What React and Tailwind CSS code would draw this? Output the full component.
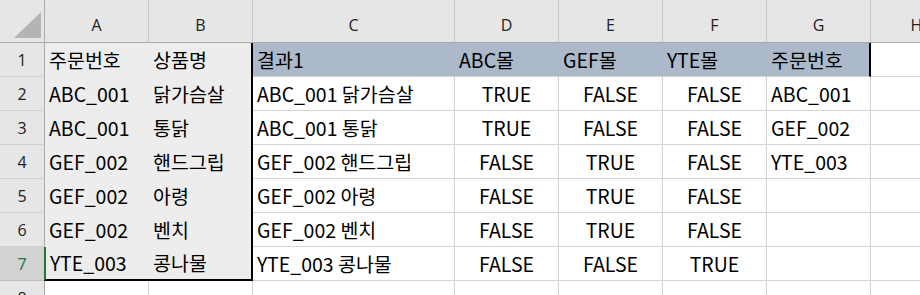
const cols = [
  { key: 'A', w: 'w-[104px]' },
  { key: 'B', w: 'w-[104px]' },
  { key: 'C', w: 'w-[202px]' },
  { key: 'D', w: 'w-[104px]' },
  { key: 'E', w: 'w-[104px]' },
  { key: 'F', w: 'w-[104px]' },
  { key: 'G', w: 'w-[104px]' },
  { key: 'H', w: 'w-[92px]' },
]

const rows = [
  ['주문번호', '상품명', '결과1', 'ABC몰', 'GEF몰', 'YTE몰', '주문번호'],
  ['ABC_001', '닭가슴살', 'ABC_001 닭가슴살', 'TRUE', 'FALSE', 'FALSE', 'ABC_001'],
  ['ABC_001', '통닭', 'ABC_001 통닭', 'TRUE', 'FALSE', 'FALSE', 'GEF_002'],
  ['GEF_002', '핸드그립', 'GEF_002 핸드그립', 'FALSE', 'TRUE', 'FALSE', 'YTE_003'],
  ['GEF_002', '아령', 'GEF_002 아령', 'FALSE', 'TRUE', 'FALSE', ''],
  ['GEF_002', '벤치', 'GEF_002 벤치', 'FALSE', 'TRUE', 'FALSE', ''],
  ['YTE_003', '콩나물', 'YTE_003 콩나물', 'FALSE', 'FALSE', 'TRUE', ''],
]

const font = { fontFamily: '"Noto Sans CJK KR", "Open Sans", sans-serif' }
const headFont = { fontFamily: '"Open Sans", "Noto Sans", sans-serif' }

function Cell({ r, c, value }) {
  const col = cols[c]
  const inAB = c <= 1 && r <= 7
  const inHead = r === 1 && c >= 2 && c <= 6
  const bool = r >= 2 && c >= 3 && c <= 5

  let cls = `${col.w} shrink-0 h-[34px] flex items-center text-[19.5px] text-black whitespace-nowrap `
  if (inAB) {
    cls += 'bg-[#ededed] '
    if (c === 1) cls += 'border-r-2 border-r-black '
    if (r === 7) cls += 'border-b-2 border-b-black '
    if (c === 0 && r === 7) cls += 'border-l-2 border-l-[#217346] -ml-[1px] w-[105px] '
  } else if (inHead) {
    cls += 'bg-[#acb9ca] '
    if (c === 6) cls += 'border-r-2 border-r-black '
    else cls += 'border-r border-r-[#acb9ca] '
    cls += 'border-b border-b-[#d4d4d4] '
  } else {
    cls += 'bg-white border-r border-b border-[#d4d4d4] '
  }
  cls += bool ? 'justify-center ' : 'pl-[4px] '

  return (
    <div className={cls} style={font}>
      {value}
    </div>
  )
}

export default function App() {
  return (
    <div className="w-[920px] h-[295px] overflow-hidden bg-white select-none">
      <div className="flex h-[43px] bg-[#e6e6e6] border-b border-[#ababab]">
        <div className="w-[45px] shrink-0 h-[42px] border-r border-[#ababab] relative">
          <svg width="45" height="42" className="absolute left-0 top-0">
            <polygon points="14,38 41,38 41,12" fill="#b4b4b4" />
          </svg>
        </div>
        {cols.map(col => (
          <div
            key={col.key}
            className={`${col.w} shrink-0 h-[42px] border-r border-[#c6c6c6] flex items-center justify-center text-[16px] text-[#222] pt-[8px]`}
            style={headFont}
          >
            {col.key}
          </div>
        ))}
      </div>
      {[...rows, null].map((row, i) => {
        const r = i + 1
        const sel = r === 7
        return (
          <div key={r} className="flex h-[34px]">
            <div
              className={`w-[45px] shrink-0 h-[34px] flex items-center justify-center text-[16px] border-r border-b ${sel ? 'bg-[#d2d2d2] text-[#217346] border-r-[#ababab] border-b-[#bdbdbd]' : 'bg-[#e6e6e6] text-[#222] border-r-[#ababab] border-b-[#d0d0d0]'}`}
              style={headFont}
            >
              {r}
            </div>
            {cols.map((col, c) =>
              row ? (
                <Cell key={col.key} r={r} c={c} value={row[c] ?? ''} />
              ) : (
                <div key={col.key} className={`${col.w} shrink-0 h-[34px] bg-white border-r border-[#d4d4d4]`} />
              )
            )}
          </div>
        )
      })}
    </div>
  )
}
